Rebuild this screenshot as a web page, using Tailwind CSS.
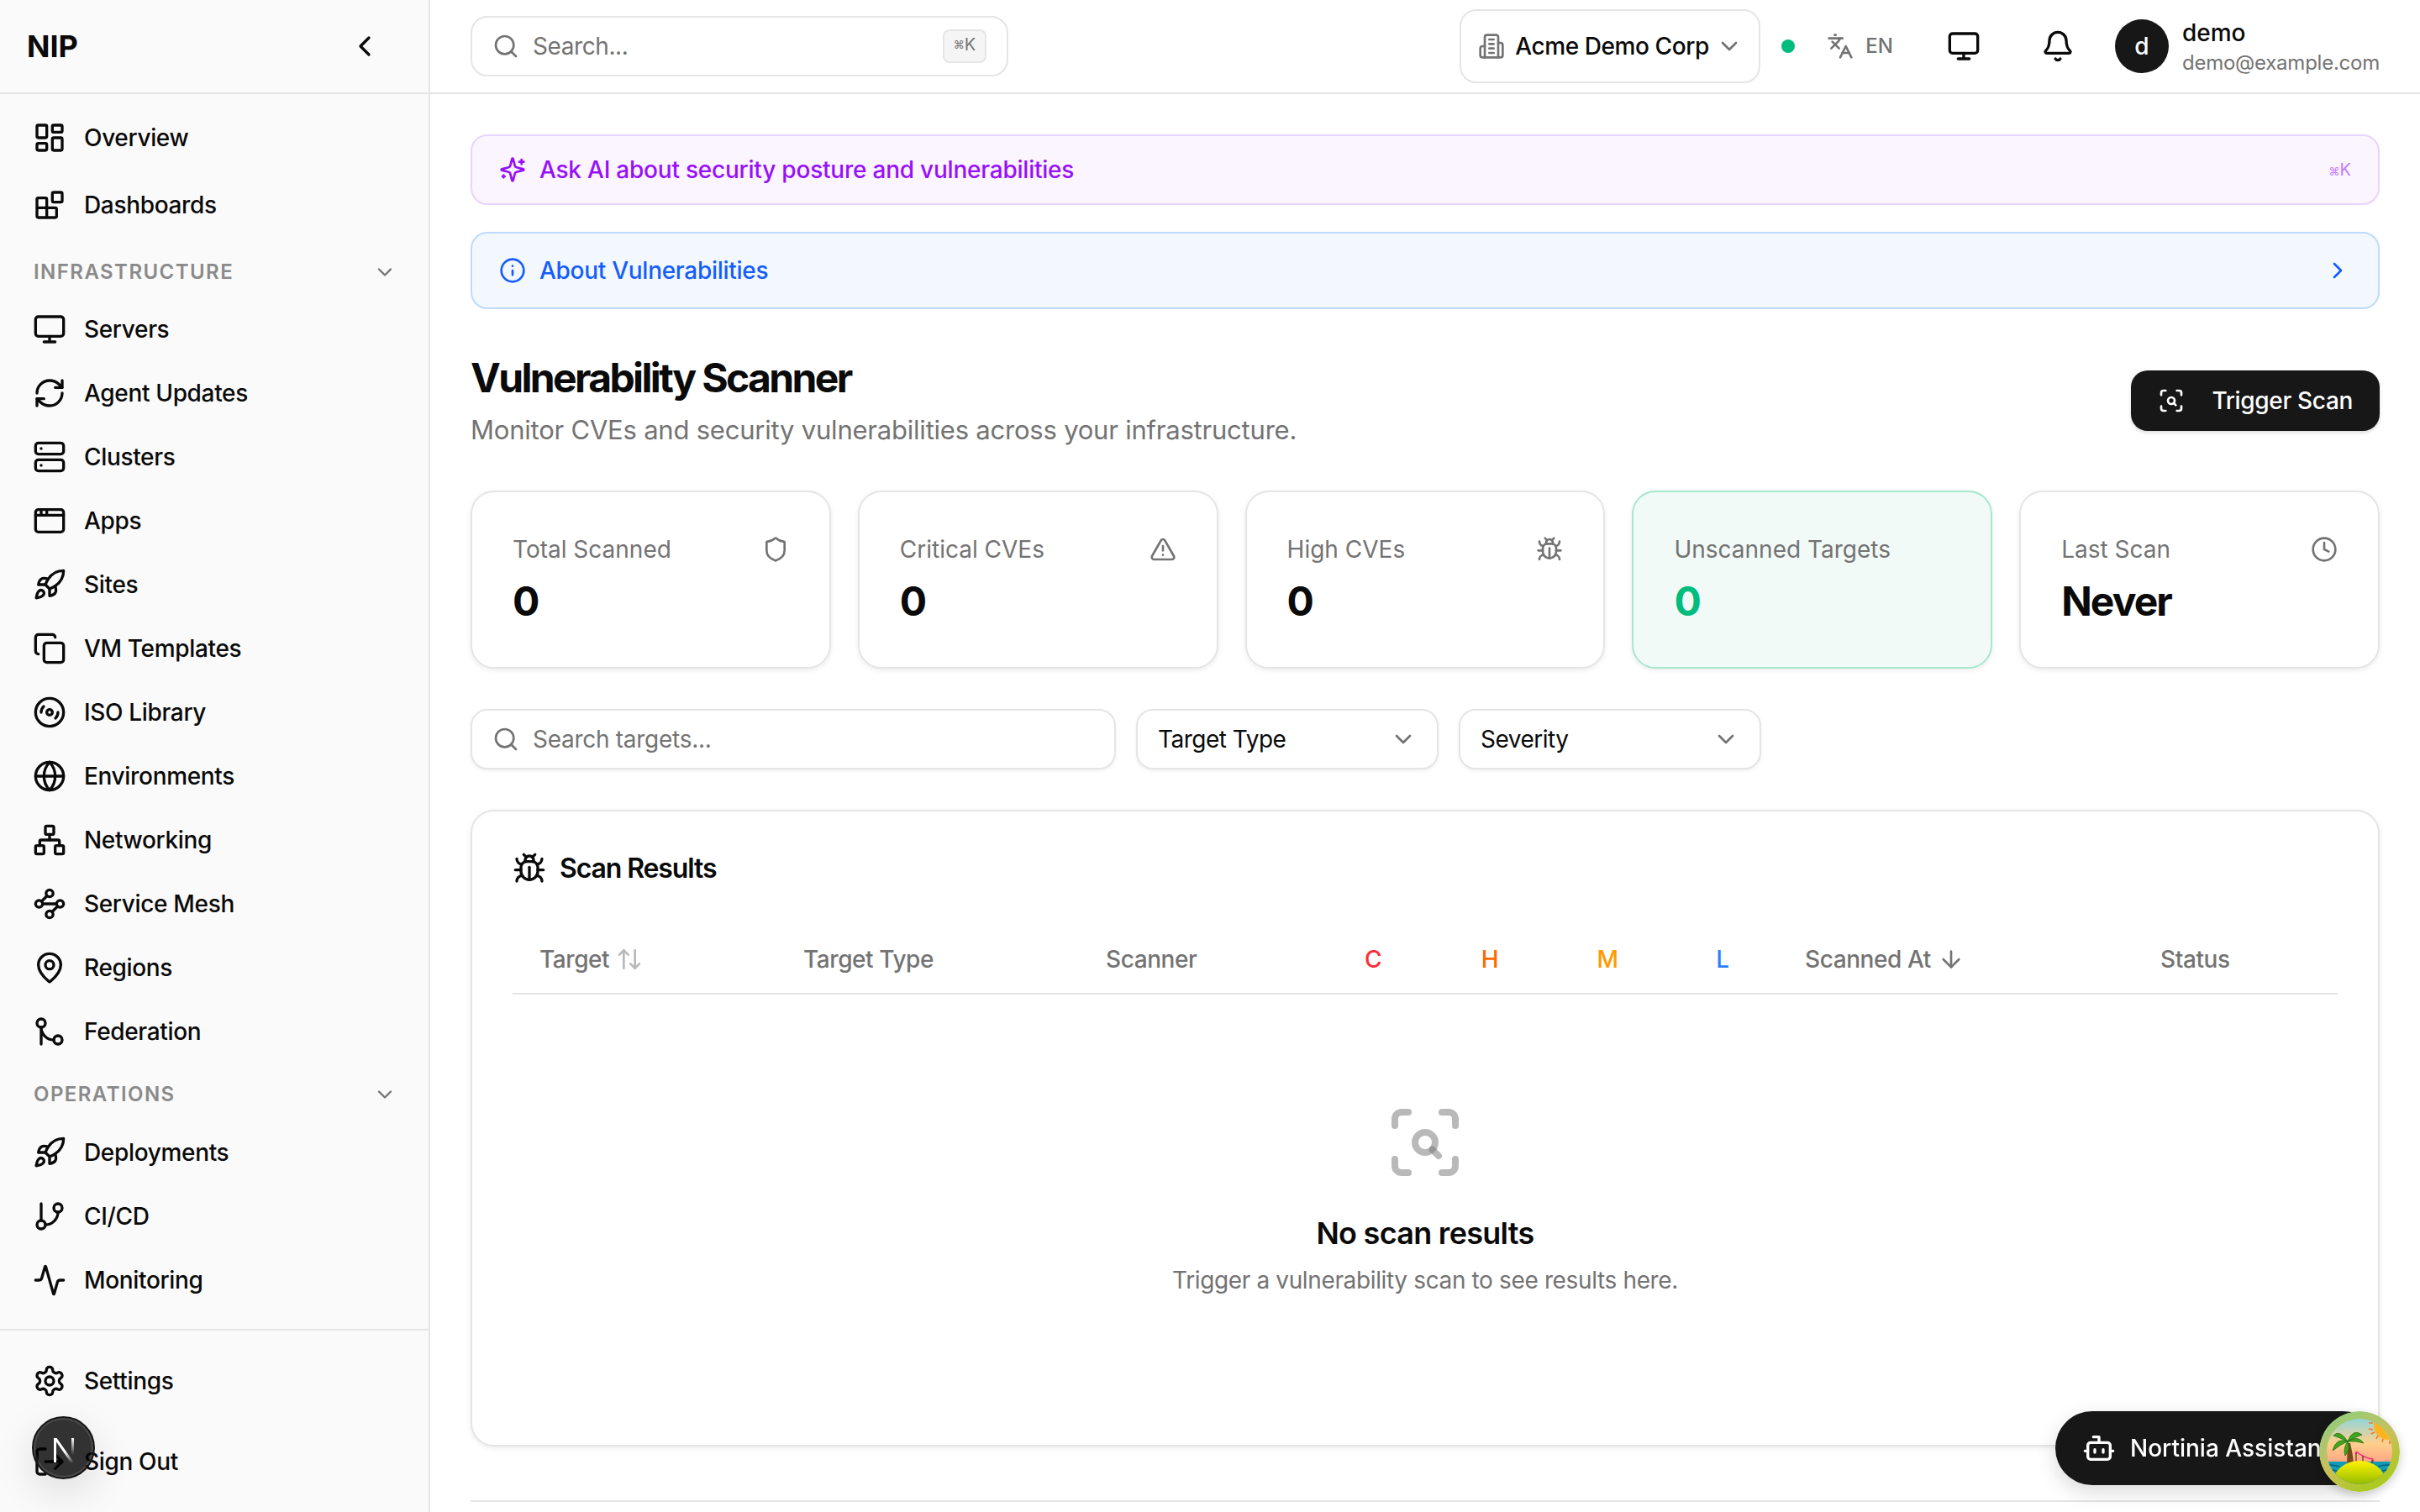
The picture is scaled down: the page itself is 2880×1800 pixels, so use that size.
<!DOCTYPE html>
<html lang="en" class="text-[32px]">
<head>
  <meta charset="UTF-8" />
  <meta name="viewport" content="width=device-width, initial-scale=1" />
  <title>Vulnerability Scanner</title>
  <script src="https://cdn.jsdelivr.net/npm/@tailwindcss/browser@4"></script>
</head>
<body class="h-screen w-screen overflow-hidden bg-white font-[Inter,sans-serif] text-neutral-950">
  <!-- lucide icons -->
  <svg class="hidden">
    <symbol id="overview" viewBox="0 0 24 24" fill="none" stroke="currentColor" stroke-width="2" stroke-linecap="round" stroke-linejoin="round"><rect width="7" height="9" x="3" y="3" rx="1"/><rect width="7" height="5" x="14" y="3" rx="1"/><rect width="7" height="9" x="14" y="12" rx="1"/><rect width="7" height="5" x="3" y="16" rx="1"/></symbol>
    <symbol id="blocks" viewBox="0 0 24 24" fill="none" stroke="currentColor" stroke-width="2" stroke-linecap="round" stroke-linejoin="round"><rect width="7" height="7" x="14" y="3" rx="1"/><path d="M10 21V8a1 1 0 0 0-1-1H4a1 1 0 0 0-1 1v12a1 1 0 0 0 1 1h12a1 1 0 0 0 1-1v-5a1 1 0 0 0-1-1H3"/></symbol>
    <symbol id="monitor" viewBox="0 0 24 24" fill="none" stroke="currentColor" stroke-width="2" stroke-linecap="round" stroke-linejoin="round"><rect width="20" height="14" x="2" y="3" rx="2"/><path d="M8 21h8M12 17v4"/></symbol>
    <symbol id="refresh" viewBox="0 0 24 24" fill="none" stroke="currentColor" stroke-width="2" stroke-linecap="round" stroke-linejoin="round"><path d="M3 12a9 9 0 0 1 9-9 9.75 9.75 0 0 1 6.74 2.74L21 8"/><path d="M21 3v5h-5"/><path d="M21 12a9 9 0 0 1-9 9 9.75 9.75 0 0 1-6.74-2.74L3 16"/><path d="M8 16H3v5"/></symbol>
    <symbol id="server" viewBox="0 0 24 24" fill="none" stroke="currentColor" stroke-width="2" stroke-linecap="round" stroke-linejoin="round"><rect width="20" height="8" x="2" y="2" rx="2"/><rect width="20" height="8" x="2" y="14" rx="2"/><path d="M6 6h.01M6 18h.01"/></symbol>
    <symbol id="app" viewBox="0 0 24 24" fill="none" stroke="currentColor" stroke-width="2" stroke-linecap="round" stroke-linejoin="round"><rect x="2" y="4" width="20" height="16" rx="2"/><path d="M10 4v4M2 8h20M6 4v4"/></symbol>
    <symbol id="rocket" viewBox="0 0 24 24" fill="none" stroke="currentColor" stroke-width="2" stroke-linecap="round" stroke-linejoin="round"><path d="M4.5 16.5c-1.5 1.26-2 5-2 5s3.74-.5 5-2c.71-.84.7-2.13-.09-2.91a2.18 2.18 0 0 0-2.91-.09z"/><path d="m12 15-3-3a22 22 0 0 1 2-3.95A12.88 12.88 0 0 1 22 2c0 2.72-.78 7.5-6 11a22.35 22.35 0 0 1-4 2z"/><path d="M9 12H4s.55-3.03 2-4c1.62-1.08 5 0 5 0"/><path d="M12 15v5s3.03-.55 4-2c1.08-1.62 0-5 0-5"/></symbol>
    <symbol id="copy" viewBox="0 0 24 24" fill="none" stroke="currentColor" stroke-width="2" stroke-linecap="round" stroke-linejoin="round"><rect width="14" height="14" x="8" y="8" rx="2"/><path d="M4 16c-1.1 0-2-.9-2-2V4c0-1.1.9-2 2-2h10c1.1 0 2 .9 2 2"/></symbol>
    <symbol id="disc" viewBox="0 0 24 24" fill="none" stroke="currentColor" stroke-width="2" stroke-linecap="round" stroke-linejoin="round"><circle cx="12" cy="12" r="10"/><path d="M6 12c0-1.7.7-3.2 1.8-4.2"/><circle cx="12" cy="12" r="2"/><path d="M18 12c0 1.7-.7 3.2-1.8 4.2"/></symbol>
    <symbol id="globe" viewBox="0 0 24 24" fill="none" stroke="currentColor" stroke-width="2" stroke-linecap="round" stroke-linejoin="round"><circle cx="12" cy="12" r="10"/><path d="M12 2a14.5 14.5 0 0 0 0 20 14.5 14.5 0 0 0 0-20"/><path d="M2 12h20"/></symbol>
    <symbol id="network" viewBox="0 0 24 24" fill="none" stroke="currentColor" stroke-width="2" stroke-linecap="round" stroke-linejoin="round"><rect x="16" y="16" width="6" height="6" rx="1"/><rect x="2" y="16" width="6" height="6" rx="1"/><rect x="9" y="2" width="6" height="6" rx="1"/><path d="M5 16v-3a1 1 0 0 1 1-1h12a1 1 0 0 1 1 1v3"/><path d="M12 12V8"/></symbol>
    <symbol id="waypoints" viewBox="0 0 24 24" fill="none" stroke="currentColor" stroke-width="2" stroke-linecap="round" stroke-linejoin="round"><circle cx="12" cy="4.5" r="2.5"/><path d="m10.2 6.3-3.9 3.9"/><circle cx="4.5" cy="12" r="2.5"/><path d="M7 12h10"/><circle cx="19.5" cy="12" r="2.5"/><path d="m13.8 17.7 3.9-3.9"/><circle cx="12" cy="19.5" r="2.5"/></symbol>
    <symbol id="pin" viewBox="0 0 24 24" fill="none" stroke="currentColor" stroke-width="2" stroke-linecap="round" stroke-linejoin="round"><path d="M20 10c0 4.993-5.539 10.193-7.399 11.799a1 1 0 0 1-1.202 0C9.539 20.193 4 14.993 4 10a8 8 0 0 1 16 0"/><circle cx="12" cy="10" r="3"/></symbol>
    <symbol id="merge" viewBox="0 0 24 24" fill="none" stroke="currentColor" stroke-width="2" stroke-linecap="round" stroke-linejoin="round"><circle cx="18" cy="18" r="3"/><circle cx="6" cy="6" r="3"/><path d="M6 21V9a9 9 0 0 0 9 9"/></symbol>
    <symbol id="branch" viewBox="0 0 24 24" fill="none" stroke="currentColor" stroke-width="2" stroke-linecap="round" stroke-linejoin="round"><path d="M6 3v12"/><circle cx="18" cy="6" r="3"/><circle cx="6" cy="18" r="3"/><path d="M18 9a9 9 0 0 1-9 9"/></symbol>
    <symbol id="activity" viewBox="0 0 24 24" fill="none" stroke="currentColor" stroke-width="2" stroke-linecap="round" stroke-linejoin="round"><path d="M22 12h-2.48a2 2 0 0 0-1.93 1.46l-2.35 8.36a.25.25 0 0 1-.48 0L9.24 2.18a.25.25 0 0 0-.48 0l-2.35 8.36A2 2 0 0 1 4.49 12H2"/></symbol>
    <symbol id="settings" viewBox="0 0 24 24" fill="none" stroke="currentColor" stroke-width="2" stroke-linecap="round" stroke-linejoin="round"><path d="M12.22 2h-.44a2 2 0 0 0-2 2v.18a2 2 0 0 1-1 1.73l-.43.25a2 2 0 0 1-2 0l-.15-.08a2 2 0 0 0-2.73.73l-.22.38a2 2 0 0 0 .73 2.73l.15.1a2 2 0 0 1 1 1.72v.51a2 2 0 0 1-1 1.74l-.15.09a2 2 0 0 0-.73 2.73l.22.38a2 2 0 0 0 2.73.73l.15-.08a2 2 0 0 1 2 0l.43.25a2 2 0 0 1 1 1.73V20a2 2 0 0 0 2 2h.44a2 2 0 0 0 2-2v-.18a2 2 0 0 1 1-1.73l.43-.25a2 2 0 0 1 2 0l.15.08a2 2 0 0 0 2.73-.73l.22-.39a2 2 0 0 0-.73-2.73l-.15-.08a2 2 0 0 1-1-1.74v-.5a2 2 0 0 1 1-1.74l.15-.09a2 2 0 0 0 .73-2.73l-.22-.38a2 2 0 0 0-2.73-.73l-.15.08a2 2 0 0 1-2 0l-.43-.25a2 2 0 0 1-1-1.73V4a2 2 0 0 0-2-2z"/><circle cx="12" cy="12" r="3"/></symbol>
    <symbol id="logout" viewBox="0 0 24 24" fill="none" stroke="currentColor" stroke-width="2" stroke-linecap="round" stroke-linejoin="round"><path d="M9 21H5a2 2 0 0 1-2-2V5a2 2 0 0 1 2-2h4"/><path d="m16 17 5-5-5-5"/><path d="M21 12H9"/></symbol>
    <symbol id="chev-down" viewBox="0 0 24 24" fill="none" stroke="currentColor" stroke-width="2" stroke-linecap="round" stroke-linejoin="round"><path d="m6 9 6 6 6-6"/></symbol>
    <symbol id="chev-left" viewBox="0 0 24 24" fill="none" stroke="currentColor" stroke-width="2" stroke-linecap="round" stroke-linejoin="round"><path d="m15 18-6-6 6-6"/></symbol>
    <symbol id="chev-right" viewBox="0 0 24 24" fill="none" stroke="currentColor" stroke-width="2" stroke-linecap="round" stroke-linejoin="round"><path d="m9 18 6-6-6-6"/></symbol>
    <symbol id="search" viewBox="0 0 24 24" fill="none" stroke="currentColor" stroke-width="2" stroke-linecap="round" stroke-linejoin="round"><path d="m21 21-4.34-4.34"/><circle cx="11" cy="11" r="8"/></symbol>
    <symbol id="building" viewBox="0 0 24 24" fill="none" stroke="currentColor" stroke-width="2" stroke-linecap="round" stroke-linejoin="round"><path d="M6 22V4a2 2 0 0 1 2-2h8a2 2 0 0 1 2 2v18Z"/><path d="M6 12H4a2 2 0 0 0-2 2v6a2 2 0 0 0 2 2h2"/><path d="M18 9h2a2 2 0 0 1 2 2v9a2 2 0 0 1-2 2h-2"/><path d="M10 6h4M10 10h4M10 14h4M10 18h4"/></symbol>
    <symbol id="languages" viewBox="0 0 24 24" fill="none" stroke="currentColor" stroke-width="2" stroke-linecap="round" stroke-linejoin="round"><path d="m5 8 6 6"/><path d="m4 14 6-6 2-3"/><path d="M2 5h12"/><path d="M7 2h1"/><path d="m22 22-5-10-5 10"/><path d="M14 18h6"/></symbol>
    <symbol id="bell" viewBox="0 0 24 24" fill="none" stroke="currentColor" stroke-width="2" stroke-linecap="round" stroke-linejoin="round"><path d="M10.268 21a2 2 0 0 0 3.464 0"/><path d="M3.262 15.326A1 1 0 0 0 4 17h16a1 1 0 0 0 .74-1.673C19.41 13.956 18 12.499 18 8A6 6 0 0 0 6 8c0 4.499-1.411 5.956-2.738 7.326"/></symbol>
    <symbol id="sparkles" viewBox="0 0 24 24" fill="none" stroke="currentColor" stroke-width="2" stroke-linecap="round" stroke-linejoin="round"><path d="M9.937 15.5A2 2 0 0 0 8.5 14.063l-6.135-1.582a.5.5 0 0 1 0-.962L8.5 9.936A2 2 0 0 0 9.937 8.5l1.582-6.135a.5.5 0 0 1 .963 0L14.063 8.5A2 2 0 0 0 15.5 9.937l6.135 1.581a.5.5 0 0 1 0 .964L15.5 14.063a2 2 0 0 0-1.437 1.437l-1.582 6.135a.5.5 0 0 1-.963 0z"/><path d="M20 3v4M22 5h-4M4 17v2M5 18H3"/></symbol>
    <symbol id="info" viewBox="0 0 24 24" fill="none" stroke="currentColor" stroke-width="2" stroke-linecap="round" stroke-linejoin="round"><circle cx="12" cy="12" r="10"/><path d="M12 16v-4M12 8h.01"/></symbol>
    <symbol id="scan" viewBox="0 0 24 24" fill="none" stroke="currentColor" stroke-width="2" stroke-linecap="round" stroke-linejoin="round"><path d="M7 3H5a2 2 0 0 0-2 2v2"/><path d="M17 3h2a2 2 0 0 1 2 2v2"/><path d="M21 17v2a2 2 0 0 1-2 2h-2"/><path d="M7 21H5a2 2 0 0 1-2-2v-2"/><circle cx="12" cy="12" r="3"/><path d="m16 16-1.9-1.9"/></symbol>
    <symbol id="shield" viewBox="0 0 24 24" fill="none" stroke="currentColor" stroke-width="2" stroke-linecap="round" stroke-linejoin="round"><path d="M20 13c0 5-3.5 7.5-7.66 8.95a1 1 0 0 1-.67-.01C7.5 20.5 4 18 4 13V6a1 1 0 0 1 1-1c2 0 4.5-1.2 6.24-2.72a1.17 1.17 0 0 1 1.52 0C14.51 3.81 17 5 19 5a1 1 0 0 1 1 1z"/></symbol>
    <symbol id="alert" viewBox="0 0 24 24" fill="none" stroke="currentColor" stroke-width="2" stroke-linecap="round" stroke-linejoin="round"><path d="m21.73 18-8-14a2 2 0 0 0-3.48 0l-8 14A2 2 0 0 0 4 21h16a2 2 0 0 0 1.73-3"/><path d="M12 9v4M12 17h.01"/></symbol>
    <symbol id="bug" viewBox="0 0 24 24" fill="none" stroke="currentColor" stroke-width="2" stroke-linecap="round" stroke-linejoin="round"><path d="m8 2 1.88 1.88"/><path d="M14.12 3.88 16 2"/><path d="M9 7.13v-1a3.003 3.003 0 1 1 6 0v1"/><path d="M12 20c-3.3 0-6-2.7-6-6v-3a4 4 0 0 1 4-4h4a4 4 0 0 1 4 4v3c0 3.3-2.7 6-6 6"/><path d="M12 20v-9"/><path d="M6.53 9C4.6 8.8 3 7.1 3 5"/><path d="M6 13H2"/><path d="M3 21c0-2.1 1.7-3.9 3.8-4"/><path d="M20.97 5c0 2.1-1.6 3.8-3.5 4"/><path d="M22 13h-4"/><path d="M17.2 17c2.1.1 3.8 1.9 3.8 4"/></symbol>
    <symbol id="clock" viewBox="0 0 24 24" fill="none" stroke="currentColor" stroke-width="2" stroke-linecap="round" stroke-linejoin="round"><circle cx="12" cy="12" r="10"/><path d="M12 6v6l4 2"/></symbol>
    <symbol id="updown" viewBox="0 0 24 24" fill="none" stroke="currentColor" stroke-width="2" stroke-linecap="round" stroke-linejoin="round"><path d="m21 16-4 4-4-4"/><path d="M17 20V4"/><path d="m3 8 4-4 4 4"/><path d="M7 4v16"/></symbol>
    <symbol id="arrow-down" viewBox="0 0 24 24" fill="none" stroke="currentColor" stroke-width="2" stroke-linecap="round" stroke-linejoin="round"><path d="M12 5v14"/><path d="m19 12-7 7-7-7"/></symbol>
    <symbol id="bot" viewBox="0 0 24 24" fill="none" stroke="currentColor" stroke-width="2" stroke-linecap="round" stroke-linejoin="round"><path d="M12 8V4H8"/><rect width="16" height="12" x="4" y="8" rx="2"/><path d="M2 14h2M20 14h2M15 13v2M9 13v2"/></symbol>
  </svg>

  <div class="flex h-full w-full">
    <!-- sidebar -->
    <aside class="flex h-full w-64 shrink-0 flex-col border-r-2 border-neutral-200 bg-neutral-50">
      <div class="flex h-14 shrink-0 items-center justify-between border-b-2 border-neutral-200 pl-4 pr-[32px]">
        <span class="text-lg font-bold">NIP</span>
        <button class="p-3"><svg class="size-5"><use href="#chev-left"/></svg></button>
      </div>

      <nav class="flex-1 pt-[14px] text-sm font-[450] tracking-[-0.012em]">
        <a class="mb-0.5 flex h-9.5 items-center gap-[21px] pl-[39px]"><svg class="size-5 shrink-0"><use href="#overview"/></svg>Overview</a>
        <a class="flex h-9.5 items-center gap-[21px] pl-[39px]"><svg class="size-5 shrink-0"><use href="#blocks"/></svg>Dashboards</a>

        <div class="flex h-9 items-center justify-between pl-[40px] pr-[38px] pt-1.5 text-xs font-semibold tracking-[0.06em]">
          <span class="text-[#8a8a8a]">INFRASTRUCTURE</span>
          <svg class="size-3.5 text-neutral-500"><use href="#chev-down"/></svg>
        </div>
        <a class="flex h-9.5 items-center gap-[21px] pl-[39px]"><svg class="size-5 shrink-0"><use href="#monitor"/></svg>Servers</a>
        <a class="flex h-9.5 items-center gap-[21px] pl-[39px]"><svg class="size-5 shrink-0"><use href="#refresh"/></svg>Agent Updates</a>
        <a class="flex h-9.5 items-center gap-[21px] pl-[39px]"><svg class="size-5 shrink-0"><use href="#server"/></svg>Clusters</a>
        <a class="flex h-9.5 items-center gap-[21px] pl-[39px]"><svg class="size-5 shrink-0"><use href="#app"/></svg>Apps</a>
        <a class="flex h-9.5 items-center gap-[21px] pl-[39px]"><svg class="size-5 shrink-0"><use href="#rocket"/></svg>Sites</a>
        <a class="flex h-9.5 items-center gap-[21px] pl-[39px]"><svg class="size-5 shrink-0"><use href="#copy"/></svg>VM Templates</a>
        <a class="flex h-9.5 items-center gap-[21px] pl-[39px]"><svg class="size-5 shrink-0"><use href="#disc"/></svg>ISO Library</a>
        <a class="flex h-9.5 items-center gap-[21px] pl-[39px]"><svg class="size-5 shrink-0"><use href="#globe"/></svg>Environments</a>
        <a class="flex h-9.5 items-center gap-[21px] pl-[39px]"><svg class="size-5 shrink-0"><use href="#network"/></svg>Networking</a>
        <a class="flex h-9.5 items-center gap-[21px] pl-[39px]"><svg class="size-5 shrink-0"><use href="#waypoints"/></svg>Service Mesh</a>
        <a class="flex h-9.5 items-center gap-[21px] pl-[39px]"><svg class="size-5 shrink-0"><use href="#pin"/></svg>Regions</a>
        <a class="flex h-9.5 items-center gap-[21px] pl-[39px]"><svg class="size-5 shrink-0"><use href="#merge"/></svg>Federation</a>

        <div class="flex h-[68px] items-center justify-between pl-[40px] pr-[38px] pt-[6px] text-xs font-semibold tracking-[0.06em]">
          <span class="text-[#8a8a8a]">OPERATIONS</span>
          <svg class="size-3.5 text-neutral-500"><use href="#chev-down"/></svg>
        </div>
        <a class="flex h-9.5 items-center gap-[21px] pl-[39px]"><svg class="size-5 shrink-0"><use href="#rocket"/></svg>Deployments</a>
        <a class="flex h-9.5 items-center gap-[21px] pl-[39px]"><svg class="size-5 shrink-0"><use href="#branch"/></svg>CI/CD</a>
        <a class="flex h-9.5 items-center gap-[21px] pl-[39px]"><svg class="size-5 shrink-0"><use href="#activity"/></svg>Monitoring</a>
      </nav>

      <div class="h-[218px] shrink-0 border-t-2 border-neutral-200 pt-[22px] text-sm font-[450] tracking-[-0.012em]">
        <a class="mb-[20px] flex h-9.5 items-center gap-[21px] pl-[39px]"><svg class="size-5 shrink-0"><use href="#settings"/></svg>Settings</a>
        <a class="flex h-9.5 items-center gap-[21px] pl-[39px]"><svg class="size-5 shrink-0"><use href="#logout"/></svg>Sign Out</a>
      </div>
    </aside>

    <div class="flex h-full min-w-0 flex-1 flex-col">
      <!-- top bar -->
      <header class="flex h-14 shrink-0 items-center justify-between border-b-2 border-neutral-200 px-6">
        <div class="flex h-[72px] w-80 items-center gap-[16px] rounded-[0.625rem] border-2 border-neutral-200 bg-white pl-3 pr-[24px]">
          <svg class="size-4 shrink-0 text-neutral-500"><use href="#search"/></svg>
          <span class="flex-1 text-sm tracking-[-0.015em] text-neutral-500">Search...</span>
          <kbd class="flex h-[40px] w-[52px] items-start justify-center rounded-[8px] border-2 border-neutral-200 bg-neutral-100 pt-[2px] font-[Inter,sans-serif] text-[20px] leading-[28px] text-neutral-500"><span class="text-[13px]">⌘</span>K</kbd>
        </div>

        <div class="flex items-center">
          <button class="flex h-11 w-[358px] items-center rounded-[0.625rem] border-2 border-neutral-200 bg-white pl-[20px] text-sm font-[450] tracking-[-0.015em]">
            <svg class="size-4 shrink-0 text-neutral-500"><use href="#building"/></svg>
            <span class="ml-[12px] w-[231px] whitespace-nowrap text-left">Acme Demo Corp</span>
            <svg class="ml-[8px] size-4 shrink-0 text-neutral-500"><use href="#chev-down"/></svg>
          </button>
          <span class="ml-[25px] size-2 rounded-full bg-emerald-500"></span>
          <svg class="ml-[38px] size-4 text-neutral-500"><use href="#languages"/></svg>
          <span class="ml-[14px] text-xs font-medium text-neutral-500">EN</span>
          <svg class="ml-[64px] size-5"><use href="#monitor"/></svg>
          <svg class="ml-[72px] size-5"><use href="#bell"/></svg>
          <span class="ml-[48px] flex size-8 items-center justify-center rounded-full bg-neutral-900 text-sm font-medium text-white">d</span>
          <div class="ml-[16px]">
            <p class="text-sm font-medium">demo</p>
            <p class="text-xs tracking-[-0.01em] text-neutral-500">demo@example.com</p>
          </div>
        </div>
      </header>

      <main class="min-h-0 flex-1 overflow-hidden px-6 pt-6">
        <div class="flex h-[84px] items-center justify-between rounded-[0.625rem] border-2 border-purple-200 bg-purple-50 pl-[32px] pr-[32px]">
          <div class="flex items-center gap-2 text-sm font-medium tracking-[-0.008em] text-purple-600">
            <svg class="size-4"><use href="#sparkles"/></svg>
            Ask AI about security posture and vulnerabilities
          </div>
          <span class="text-[20px] text-purple-400"><span class="text-[13px]">⌘</span>K</span>
        </div>

        <div class="mt-4 flex h-[92px] items-center justify-between rounded-[0.625rem] border-2 border-blue-200 bg-[#f3f8ff] pl-[32px] pr-[32px]">
          <div class="flex items-center gap-2 text-sm font-medium tracking-[-0.01em] text-blue-600">
            <svg class="size-4"><use href="#info"/></svg>
            About Vulnerabilities
          </div>
          <svg class="size-4 text-blue-600"><use href="#chev-right"/></svg>
        </div>

        <div class="mt-[50px] flex items-center justify-between">
          <div>
            <h1 class="text-2xl font-bold tracking-[-0.055em]">Vulnerability Scanner</h1>
            <p class="mt-[6px] text-[31px] leading-[48px] tracking-[-0.007em] text-neutral-500">Monitor CVEs and security vulnerabilities across your infrastructure.</p>
          </div>
          <button class="flex h-9 items-center gap-4 rounded-[0.625rem] bg-neutral-900 pl-[32px] pr-4 text-sm font-medium tracking-[-0.012em] text-white shadow-[0_2px_4px_rgb(0_0_0/0.15)]">
            <svg class="size-4"><use href="#scan"/></svg>
            Trigger Scan
          </button>
        </div>

        <!-- stats -->
        <div class="mt-6 grid grid-cols-5 gap-4">
          <div class="rounded-[0.875rem] border-2 border-neutral-200 bg-white p-6 shadow-[0_2px_6px_rgb(0_0_0/0.08)]">
            <div class="flex items-center justify-between text-sm text-neutral-500">Total Scanned<svg class="size-4"><use href="#shield"/></svg></div>
            <p class="-mb-[2px] mt-[10px] text-2xl font-bold">0</p>
          </div>
          <div class="rounded-[0.875rem] border-2 border-neutral-200 bg-white p-6 shadow-[0_2px_6px_rgb(0_0_0/0.08)]">
            <div class="flex items-center justify-between text-sm text-neutral-500">Critical CVEs<svg class="size-4"><use href="#alert"/></svg></div>
            <p class="-mb-[2px] mt-[10px] text-2xl font-bold">0</p>
          </div>
          <div class="rounded-[0.875rem] border-2 border-neutral-200 bg-white p-6 shadow-[0_2px_6px_rgb(0_0_0/0.08)]">
            <div class="flex items-center justify-between text-sm text-neutral-500">High CVEs<svg class="size-4"><use href="#bug"/></svg></div>
            <p class="-mb-[2px] mt-[10px] text-2xl font-bold">0</p>
          </div>
          <div class="rounded-[0.875rem] border-2 border-[#a7e8cd] bg-[#f2faf7] p-6 shadow-[0_2px_6px_rgb(0_0_0/0.08)]">
            <div class="flex h-5 items-center text-sm text-neutral-500">Unscanned Targets</div>
            <p class="-mb-[2px] mt-[10px] text-2xl font-bold text-emerald-500">0</p>
          </div>
          <div class="rounded-[0.875rem] border-2 border-neutral-200 bg-white p-6 shadow-[0_2px_6px_rgb(0_0_0/0.08)]">
            <div class="flex items-center justify-between text-sm text-neutral-500">Last Scan<svg class="size-4"><use href="#clock"/></svg></div>
            <p class="-mb-[2px] mt-[10px] text-2xl font-bold tracking-[-0.04em]">Never</p>
          </div>
        </div>

        <!-- filters -->
        <div class="mt-6 flex gap-3">
          <div class="flex h-9 w-96 items-center gap-[16px] rounded-[0.625rem] border-2 border-neutral-200 bg-white pl-3 shadow-[0_2px_4px_rgb(0_0_0/0.06)]">
            <svg class="size-4 text-neutral-500"><use href="#search"/></svg>
            <span class="text-sm tracking-[-0.01em] text-neutral-500">Search targets...</span>
          </div>
          <div class="flex h-9 w-45 items-center justify-between rounded-[0.625rem] border-2 border-neutral-200 bg-white px-3 text-sm tracking-[-0.018em] shadow-[0_2px_4px_rgb(0_0_0/0.06)]">Target Type<svg class="size-4 text-neutral-500"><use href="#chev-down"/></svg></div>
          <div class="flex h-9 w-45 items-center justify-between rounded-[0.625rem] border-2 border-neutral-200 bg-white px-3 text-sm tracking-[-0.018em] shadow-[0_2px_4px_rgb(0_0_0/0.06)]">Severity<svg class="size-4 text-neutral-500"><use href="#chev-down"/></svg></div>
        </div>

        <!-- results -->
        <section class="mt-6 rounded-[0.875rem] border-2 border-neutral-200 bg-white p-6 shadow-[0_2px_6px_rgb(0_0_0/0.08)]">
          <div class="flex h-5 items-center gap-2 text-base font-semibold tracking-[-0.035em]"><svg class="size-5"><use href="#bug"/></svg>Scan Results</div>
          <div class="mt-6 grid h-[82px] grid-cols-[314px_360px_280px_140px_138px_142px_132px_423px_1fr] items-center border-b-2 border-neutral-200 text-sm font-medium tracking-[-0.015em] text-neutral-500">
            <span class="flex items-center gap-[8px] pl-4">Target<svg class="size-4 opacity-50"><use href="#updown"/></svg></span>
            <span class="pl-4">Target Type</span>
            <span class="pl-4">Scanner</span>
            <span class="text-center text-red-500">C</span>
            <span class="text-center text-orange-500">H</span>
            <span class="text-center text-amber-500">M</span>
            <span class="text-center text-blue-500">L</span>
            <span class="flex items-center gap-[8px] pl-[32px]">Scanned At<svg class="size-4"><use href="#arrow-down"/></svg></span>
            <span class="pl-4">Status</span>
          </div>
          <div class="flex flex-col items-center py-16">
            <svg class="size-12 text-neutral-500/50"><use href="#scan"/></svg>
            <p class="mt-4 text-lg font-semibold tracking-[-0.02em]">No scan results</p>
            <p class="mt-1 text-sm tracking-[-0.013em] text-neutral-500">Trigger a vulnerability scan to see results here.</p>
          </div>
        </section>

        <div class="mt-[64px] border-t-2 border-neutral-200"></div>
      </main>
    </div>
  </div>

  <!-- next dev badge -->
  <div class="fixed left-[38px] top-[1686px] flex size-[75px] items-center justify-center rounded-full border-2 border-[#161616] bg-black/80 shadow-[0_16px_48px_rgb(0_0_0/0.12),inset_0_0_0_2px_rgb(255_255_255/0.12)]">
    <svg class="mt-[6px] h-[29px] w-[24px]" viewBox="0 0 24 29">
      <defs>
        <linearGradient id="n-a" x1="0" y1="0" x2="1" y2="1"><stop offset="0.55" stop-color="#fff"/><stop offset="1" stop-color="#fff" stop-opacity="0"/></linearGradient>
        <linearGradient id="n-b" x1="0" y1="0" x2="0" y2="1"><stop offset="0" stop-color="#fff"/><stop offset="1" stop-color="#fff" stop-opacity="0"/></linearGradient>
      </defs>
      <rect width="3" height="29" fill="#fff"/>
      <path d="M0 0h3.5L24 29h-4z" fill="url(#n-a)"/>
      <rect x="21" width="3" height="20" fill="url(#n-b)"/>
    </svg>
  </div>

  <!-- assistant -->
  <div class="fixed bottom-[32px] right-[48px] flex h-11 w-[386px] items-center gap-[17px] rounded-full bg-neutral-900 pl-[32px] text-sm font-medium text-white shadow-[0_8px_24px_rgb(0_0_0/0.15)]">
    <svg class="size-5 shrink-0"><use href="#bot"/></svg>
    <span class="whitespace-nowrap">Nortinia Assistant</span>
    <svg class="absolute right-[-24px] top-0 size-[96px] rounded-full shadow-[0_4px_12px_rgb(0_0_0/0.2)]" viewBox="0 0 96 96">
      <defs>
        <linearGradient id="ring" x1="0.2" y1="0" x2="0.8" y2="1"><stop offset="0" stop-color="#8fce7e"/><stop offset="0.5" stop-color="#c9bf5a"/><stop offset="1" stop-color="#a4cc12"/></linearGradient>
        <linearGradient id="sky" x1="0" y1="0" x2="0" y2="1"><stop offset="0" stop-color="#6fd8f2"/><stop offset="0.4" stop-color="#ffd08c"/><stop offset="0.75" stop-color="#ff8f7e"/></linearGradient>
        <linearGradient id="hill" x1="0" y1="0" x2="0" y2="1"><stop offset="0" stop-color="#fff200"/><stop offset="1" stop-color="#2f8a00"/></linearGradient>
        <clipPath id="pic"><circle cx="48" cy="48" r="39"/></clipPath>
      </defs>
      <circle cx="48" cy="48" r="48" fill="url(#ring)"/>
      <g clip-path="url(#pic)">
        <rect width="96" height="96" fill="url(#sky)"/>
        <circle cx="82" cy="17" r="17" fill="#ffb31f"/>
        <path d="M59 14h5M59 21l5 1M62 27l4-2M68 33l2-4M75 37l1-4M84 39v-4" stroke="#f8742a" stroke-width="1.6"/>
        <rect y="60" width="96" height="36" fill="#0f9bb7"/>
        <path d="M0 66q12-4 24 0M0 72q12-4 24 0M70 66q10-4 26 0M72 72q10-4 24 0" stroke="#075f7a" stroke-width="1.4" fill="none"/>
        <path d="M33 62q1-12 0-24h4q3 12 4 24z" fill="#7b4a1a"/>
        <g fill="#3fa81c" stroke="#1f6a0e" stroke-width="0.8">
          <path d="M34 36Q24 21 17 29Q23 31 34 36z"/>
          <path d="M34 36Q20 31 16 47Q26 39 34 36z"/>
          <path d="M34 36Q28 45 31 53Q38 46 34 36z"/>
          <path d="M34 36Q40 20 51 28Q44 30 34 36z"/>
          <path d="M34 36Q46 28 53 38Q44 35 34 36z"/>
        </g>
        <path d="M44 48q10 8 20 9M44 48v3M64 57v3" stroke="#ff1f7a" stroke-width="1.6" fill="none"/>
        <path d="M44 50v10M52 53v8M63 58v4" stroke="#222" stroke-width="1"/>
        <ellipse cx="48" cy="86" rx="32" ry="27" fill="url(#hill)"/>
      </g>
    </svg>
  </div>
</body>
</html>
